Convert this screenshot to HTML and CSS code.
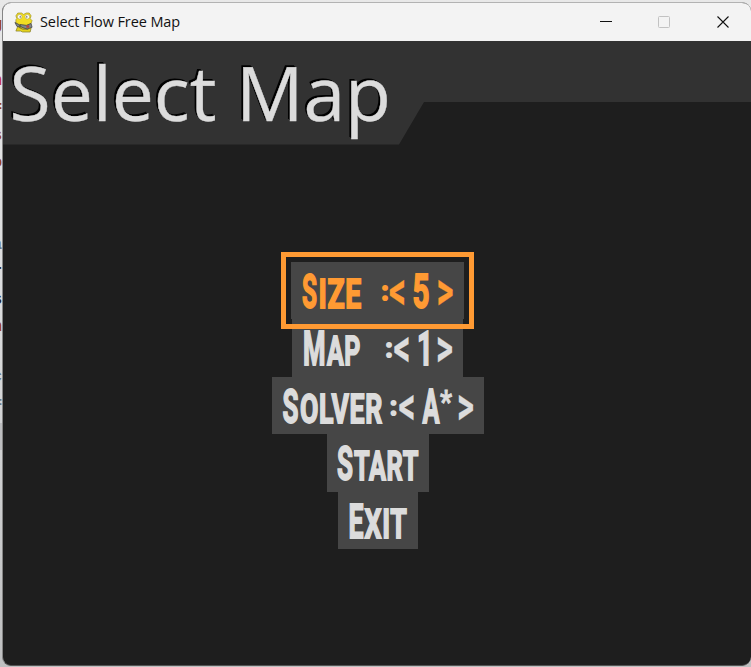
FILE: index.html
```
<!DOCTYPE html>
<html lang="en">
<head>
<meta charset="utf-8">
<title>Select Flow Free Map</title>
<link rel="stylesheet" href="styles.css">
</head>
<body>
<div class="desktop">
  <div class="behind" aria-hidden="true">
    <span class="brown">g</span><span class="gap"></span>
    <span class="red">n</span><span class="brown">=</span><span class="brown">s</span><span class="brown">o</span><span class="brown low">-</span>
    <span class="gap small"></span><span class="slate">a</span><span class="ink">r</span><span class="ink">s</span><span class="brown">n</span><span class="gap small"></span><span class="slate">c</span><span class="slate">=</span><span class="thumb"></span>
  </div>
  <main class="window">
    <header class="titlebar">
      <svg class="snake" viewBox="0 0 20 22">
        <path d="M4 15 2 20h5l2 1h8l1-4-3-2z" fill="#e5d21c" stroke="#8b8430" stroke-width=".8"/>
        <path d="M4 1h4l2 1.5L13 1h3l2 3-1 3 2 2-1 3-6 3H6L2 12V8l1-1-1-3z" fill="#f2dd22" stroke="#9a9022" stroke-width=".7"/>
        <circle cx="6" cy="5" r="2.4" fill="#fff" stroke="#aaa253" stroke-width=".6"/>
        <circle cx="14" cy="5" r="2.4" fill="#fff" stroke="#aaa253" stroke-width=".6"/>
        <path d="M6.5 4v2M13.5 4v2" stroke="#555" stroke-width="1"/>
        <path d="m1 11 4 2 2 3-4-1zM6 13l7 1 5-2 1 4-5 2-6-2z" fill="#81888c" stroke="#444" stroke-width=".8"/>
        <path d="M13 14h3v2.5h-3z" fill="#b5443b"/>
        <path d="m5 16 4 2 6 0" fill="none" stroke="#615b2f" stroke-width=".8"/>
      </svg>
      <span class="caption">Select Flow Free Map</span>
      <svg class="controls" viewBox="0 0 151 38">
        <path class="minimize" d="M0 18.5h12"/>
        <rect class="maximize" x="58.5" y="13.5" width="11" height="11" rx="1"/>
        <path class="close" d="m117.5 13.5 11 11m0-11-11 11"/>
      </svg>
    </header>
    <section class="game">
      <div class="banner"><h1>Select Map</h1></div>
      <nav class="menu">
        <div class="item size selected">
          <svg viewBox="0 0 173 58"><text y="45.9"><tspan x="11" textLength="15" lengthAdjust="spacingAndGlyphs">S</tspan><tspan class="sc" x="27.5" textLength="43.5" lengthAdjust="spacingAndGlyphs">IZE</tspan></text>
            <text class="colon" x="90.5" y="38">:</text><text class="arrow" x="98" y="46.5" textLength="17" lengthAdjust="spacingAndGlyphs">&lt;</text><text x="121.5" y="45.9" textLength="17" lengthAdjust="spacingAndGlyphs">5</text><text class="arrow" x="145.5" y="46.5" textLength="17" lengthAdjust="spacingAndGlyphs">&gt;</text></svg>
        </div>
        <div class="item map">
          <svg viewBox="0 0 171 58"><text y="45.9"><tspan x="11" textLength="22.5" lengthAdjust="spacingAndGlyphs">M</tspan><tspan class="sc" x="35" textLength="34" lengthAdjust="spacingAndGlyphs">AP</tspan></text>
            <text class="colon" x="93.5" y="38">:</text><text class="arrow" x="101.5" y="46.5" textLength="17" lengthAdjust="spacingAndGlyphs">&lt;</text><text x="125" y="45.9" textLength="16" lengthAdjust="spacingAndGlyphs">1</text><text class="arrow" x="144" y="46.5" textLength="17" lengthAdjust="spacingAndGlyphs">&gt;</text></svg>
        </div>
        <div class="item solver">
          <svg viewBox="0 0 212 58"><text y="45.9"><tspan x="10.5" textLength="16" lengthAdjust="spacingAndGlyphs">S</tspan><tspan class="sc" x="28" textLength="83" lengthAdjust="spacingAndGlyphs">OLVER</tspan></text>
            <text class="colon" x="118" y="38">:</text><text class="arrow" x="126.5" y="46.5" textLength="17" lengthAdjust="spacingAndGlyphs">&lt;</text><text x="150.5" y="45.9" textLength="17" lengthAdjust="spacingAndGlyphs">A</text><text class="star" x="168" y="34.5" textLength="12" lengthAdjust="spacingAndGlyphs">*</text><text class="arrow" x="185" y="46.5" textLength="17" lengthAdjust="spacingAndGlyphs">&gt;</text></svg>
        </div>
        <div class="item start">
          <svg viewBox="0 0 102 58"><text y="45.9"><tspan x="10" textLength="16" lengthAdjust="spacingAndGlyphs">S</tspan><tspan class="sc" x="27" textLength="65" lengthAdjust="spacingAndGlyphs">TART</tspan></text></svg>
        </div>
        <div class="item exit">
          <svg viewBox="0 0 80 58"><text y="45.9"><tspan x="10.5" textLength="15" lengthAdjust="spacingAndGlyphs">E</tspan><tspan class="sc" x="26.5" textLength="43" lengthAdjust="spacingAndGlyphs">XIT</tspan></text></svg>
        </div>
      </nav>
    </section>
  </main>
</div>
</body>
</html>
```
FILE: styles.css
```
* { box-sizing: border-box; }
body { margin: 0; overflow: hidden; }
.desktop {
  width: 751px;
  height: 667px;
  display: flex;
  padding-top: 2px;
  background: linear-gradient(#e8e8e8, #d9dadb 50%, #bfc0c1);
}
.behind {
  width: 2px;
  height: 665px;
  padding-top: 10px;
  overflow: hidden;
  display: flex;
  flex-direction: column;
  align-items: flex-end;
  flex: none;
  font: bold 16px/27.5px "Liberation Mono", monospace;
}
.behind span { flex: none; height: 27.5px; }
.behind .gap { height: 28px; }
.behind .small { height: 22px; }
.behind .low { padding-top: 8px; height: 32px; }
.behind .thumb { width: 2px; height: 27px; margin-top: 4px; background: #bdbec0; }
.brown { color: #9a4218; }
.red { color: #c33850; }
.slate { color: #687782; }
.ink { color: #202020; }
.window {
  width: 749px;
  height: 664px;
  flex: none;
  overflow: hidden;
  display: flex;
  flex-direction: column;
  border: 1px solid #b2b2b2;
  border-right: 0;
  border-left-color: #858585;
  border-bottom-color: #555;
  border-radius: 9px;
  background: #1e1e1e;
}
.titlebar {
  height: 38px;
  flex: none;
  display: flex;
  align-items: center;
  padding-left: 11px;
  background: #f3f3f3;
}
.snake { width: 19px; height: 21px; flex: none; }
.caption {
  margin-left: 7px;
  font: 14.5px/20px "Open Sans", sans-serif;
  letter-spacing: -0.1px;
  color: #111;
  white-space: nowrap;
}
.controls { width: 151px; height: 38px; margin-left: auto; flex: none; fill: none; }
.minimize, .close { stroke: #111; stroke-width: 1.1; }
.maximize { stroke: #c2c2c2; }
.game { flex: 1; min-height: 0; }
.banner {
  height: 103.5px;
  background: #323232;
  clip-path: polygon(0 0, 100% 0, 100% 61px, 421px 61px, 396px 103.5px, 0 103.5px);
}
h1 {
  margin: 0;
  padding-left: 6.5px;
  font: 75px/102px "Open Sans", sans-serif;
  color: #dcdcdc;
  -webkit-text-stroke: .4px #dcdcdc;
  text-shadow: -1px -1px 0 #000, -2px -2px 0 #000;
  white-space: nowrap;
}
.menu {
  width: 750px;
  padding-top: 117px;
  display: flex;
  flex-direction: column;
  align-items: center;
}
.item { height: 57.6px; flex: none; background: #464646; color: #dcdcdc; }
.item svg { display: block; width: 100%; height: 58px; overflow: visible; }
.item text {
  font: bold 47.5px Roboto, sans-serif;
  fill: currentColor;
  stroke: currentColor;
  stroke-width: 1.8px;
}
.item .sc { font-size: 40px; letter-spacing: 1px; }
.item .colon { font-size: 25px; stroke-width: 2px; stroke-linejoin: round; }
.item .arrow { font-size: 54px; stroke-width: .2px; }
.item .star { font-size: 32px; stroke-width: .9px; }
.selected { color: #ff9a33; outline: 5px solid #ff9a33; outline-offset: 5px; position: relative; }
.size { width: 173px; margin-right: 2px; }
.map { width: 171px; margin-right: 2px; }
.solver { width: 212px; }
.start { width: 102px; }
.exit { width: 80px; }
```
